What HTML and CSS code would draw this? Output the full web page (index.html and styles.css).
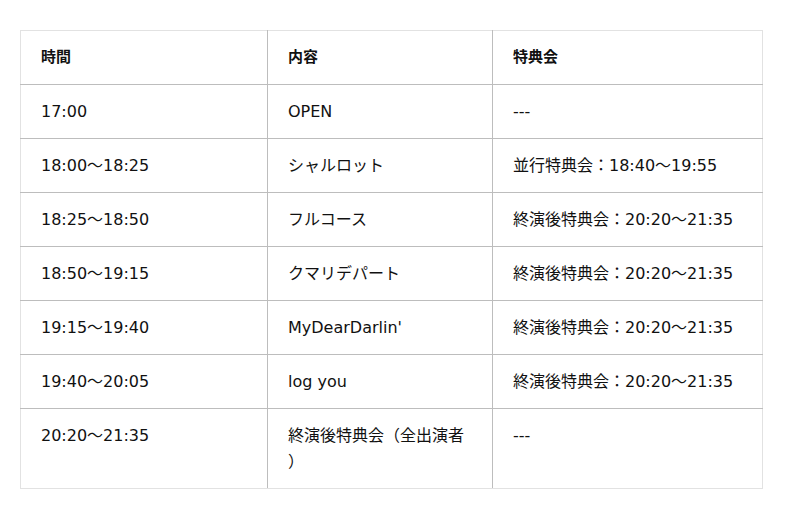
FILE: index.html
```html
<!DOCTYPE html>
<html lang="ja">
<head>
<meta charset="utf-8">
<link rel="stylesheet" href="styles.css">
</head>
<body>
<div class="wrap">
<table class="schedule">
<colgroup><col class="c1"><col class="c2"><col class="c3"></colgroup>
<thead>
<tr><th>時間</th><th>内容</th><th>特典会</th></tr>
</thead>
<tbody>
<tr><td>17:00</td><td>OPEN</td><td>---</td></tr>
<tr><td>18:00〜18:25</td><td>シャルロット</td><td>並行特典会：18:40〜19:55</td></tr>
<tr><td>18:25〜18:50</td><td>フルコース</td><td>終演後特典会：20:20〜21:35</td></tr>
<tr><td>18:50〜19:15</td><td>クマリデパート</td><td>終演後特典会：20:20〜21:35</td></tr>
<tr><td>19:15〜19:40</td><td>MyDearDarlin'</td><td>終演後特典会：20:20〜21:35</td></tr>
<tr><td>19:40〜20:05</td><td>log you</td><td>終演後特典会：20:20〜21:35</td></tr>
<tr><td>20:20〜21:35</td><td>終演後特典会（全出演者<br>）</td><td>---</td></tr>
</tbody>
</table>
</div>
</body>
</html>
```

FILE: styles.css
```css
html, body {
  margin: 0;
  padding: 0;
  background: #fff;
}
.wrap {
  padding: 30px 38px 0 20px;
}
.schedule {
  width: 742px;
  border-collapse: collapse;
  table-layout: fixed;
  font-family: "DejaVu Sans", "Noto Sans CJK JP", sans-serif;
  font-size: 16px;
  line-height: 26px;
  color: #111;
  border: 1px solid #e2e2e2;
}
.c1 { width: 247px; }
.c2 { width: 225px; }
.c3 { width: 270px; }
.schedule th,
.schedule td {
  text-align: left;
  vertical-align: top;
  padding: 14px 20px 13px;
  border: 1px solid #bdbdbd;
}
.schedule th {
  font-weight: bold;
  font-size: 15px;
  padding: 13px 20px 14px;
}
.schedule tr:first-child th { border-top-color: #e2e2e2; }
.schedule tr:last-child td { border-bottom-color: #e2e2e2; }
.schedule th:first-child, .schedule td:first-child { border-left-color: #e2e2e2; }
.schedule th:last-child, .schedule td:last-child { border-right-color: #e2e2e2; }
```
